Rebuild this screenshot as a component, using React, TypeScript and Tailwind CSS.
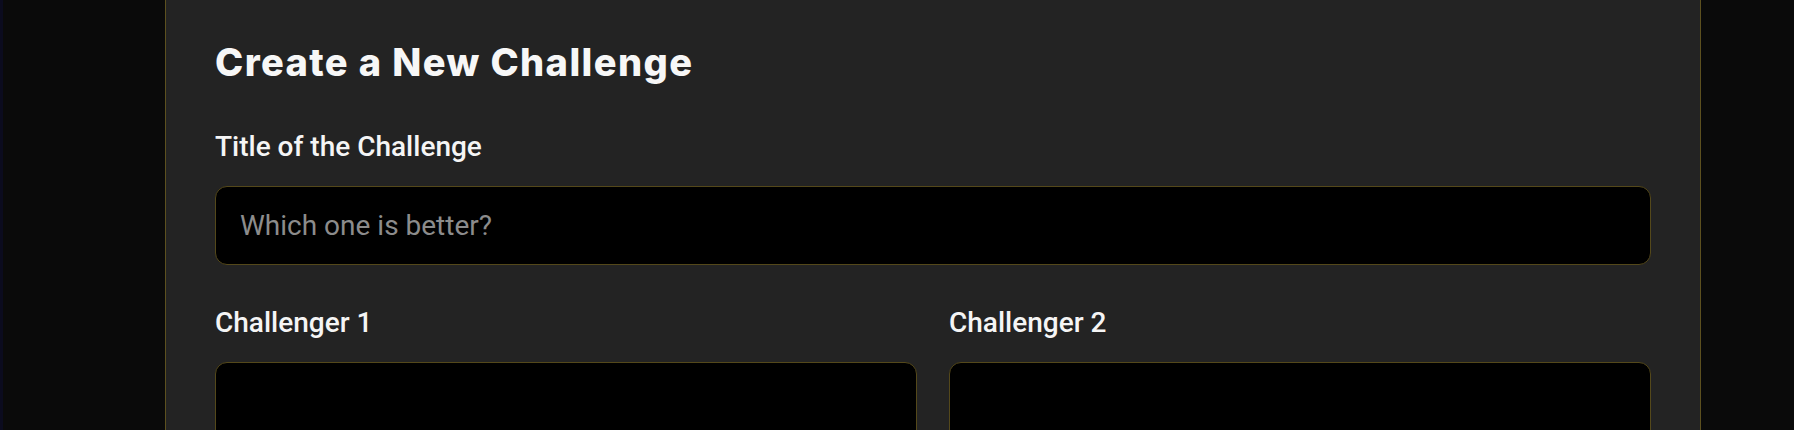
import { useState } from 'react';

const fieldClass =
    'w-full rounded-[12px] border border-[#54481a] bg-black text-white outline-none placeholder:text-[#8c8c8c]';

const CreateChallengeRoute = () => {
    const [title, setTitle] = useState('');
    const [first, setFirst] = useState('');
    const [second, setSecond] = useState('');

    return (
        <div className="flex min-h-[430px] w-full overflow-hidden bg-[#0a0a0a] font-['Roboto',sans-serif]">
            <div className="w-[3px] shrink-0 bg-[#0b0b1e]" />
            <div className="ml-[162px] w-[1536px] shrink-0 border-x border-[#5c501f] bg-[#232323] px-[49px] pt-[39px] pb-12">
                <h1 className="mb-[45px] font-['Inter',sans-serif] text-[38px] font-extrabold leading-[46px] tracking-[1.4px] text-[#f7f7f7]">
                    Create a New Challenge
                </h1>

                {/* Title */}
                <label className="mb-[22px] block text-[28px] font-medium leading-[34px] text-[#f5f5f5]">
                    Title of the Challenge
                </label>
                <input
                    value={title}
                    onChange={(e) => setTitle(e.target.value)}
                    placeholder="Which one is better?"
                    className={`${fieldClass} h-[79px] px-[24px] text-[28px]`}
                />

                {/* Challengers */}
                <div className="mt-[41px] grid grid-cols-2 gap-8">
                    <div>
                        <label className="mb-[22px] block text-[28px] font-medium leading-[34px] text-[#f5f5f5]">
                            Challenger 1
                        </label>
                        <textarea
                            value={first}
                            onChange={(e) => setFirst(e.target.value)}
                            className={`${fieldClass} block h-[200px] resize-none p-[24px] text-[28px]`}
                        />
                    </div>
                    <div>
                        <label className="mb-[22px] block text-[28px] font-medium leading-[34px] text-[#f5f5f5]">
                            Challenger 2
                        </label>
                        <textarea
                            value={second}
                            onChange={(e) => setSecond(e.target.value)}
                            className={`${fieldClass} block h-[200px] resize-none p-[24px] text-[28px]`}
                        />
                    </div>
                </div>
            </div>
        </div>
    );
};

export default CreateChallengeRoute;
